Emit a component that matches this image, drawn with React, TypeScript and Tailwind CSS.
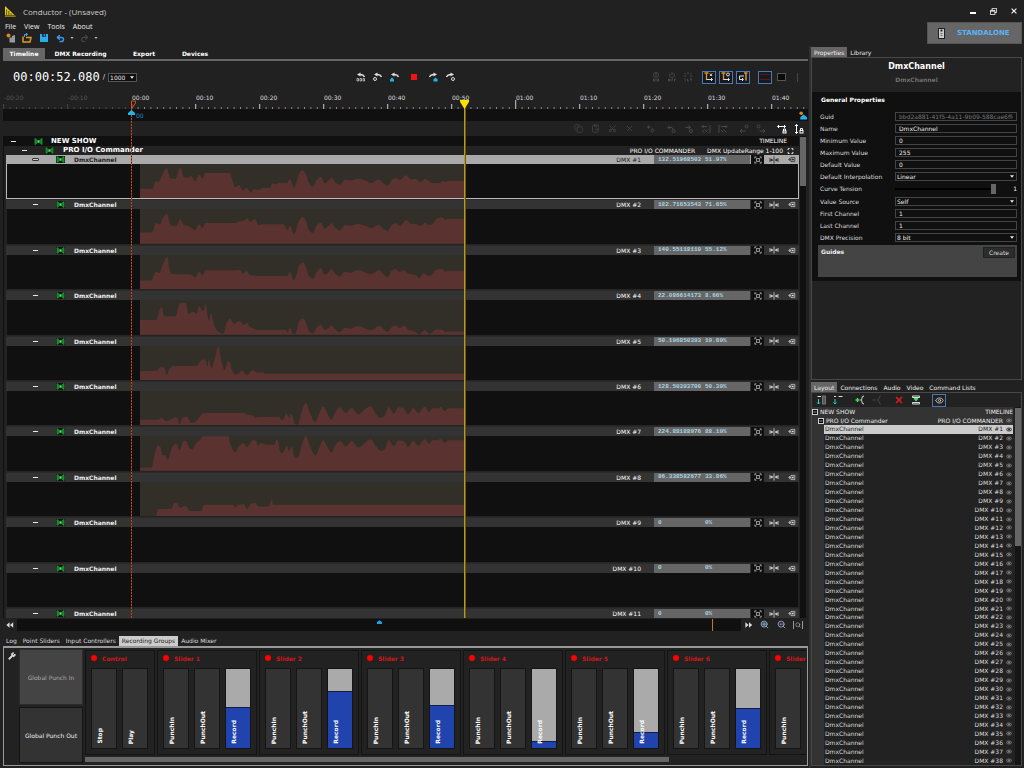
import React from "react";
import { Copy, ClipboardPaste, Scissors, X, Wrench, Minus, Search, ZoomIn, ZoomOut, Eye, Undo2, Redo2 } from "lucide-react";

type IconProps = { children: React.ReactNode; className?: string; box?: string };

const Glyph = ({ children, className = "w-[10px] h-[10px]", box = "0 0 20 20" }: IconProps) => (
  <svg viewBox={box} className={"shrink-0 " + className} fill="none" stroke="currentColor" strokeWidth="2" aria-hidden="true">
    {children}
  </svg>
);

const waves: { top: number; pts: string }[] = [
  { top: 27, pts: "30,101 68,101 77,79 88,80 97,58 110,39 121,70 136,72 151,37 161,65 175,68 184,63 195,79 207,59 218,71 226,54 298,54 316,96 328,90 338,106 350,99 363,112 372,101 385,105 398,98 420,98 427,85 437,88 447,83 471,83 480,72 492,98 500,80 508,55 518,46 527,55 535,80 549,95 560,75 573,65 584,85 594,78 605,68 617,83 629,89 645,74 660,76 685,71 710,78 725,85 745,73 760,85 773,92 785,75 797,69 810,74 828,61 842,73 856,71 872,81 884,71 896,77 905,84 928,84 940,77 945,81 955,77 1002,77" },
  { top: 164, pts: "30,234 66,234 78,206 90,210 100,188 111,178 122,212 138,216 151,195 161,212 175,215 195,227 207,210 218,221 226,206 318,206 325,202 340,200 350,192 362,202 376,194 384,213 398,210 460,210 472,227 480,214 492,240 508,197 518,188 528,200 537,228 549,235 560,212 573,205 584,223 594,216 605,207 617,221 629,228 645,212 660,214 685,209 710,216 725,222 745,211 760,223 773,229 785,213 797,206 810,214 828,197 845,209 856,208 872,215 884,205 896,211 908,210 918,195 936,189 946,197 955,193 1002,193" },
  { top: 300, pts: "30,376 64,376 77,350 88,354 98,328 112,306 119,345 127,357 180,358 195,367 207,351 218,361 226,346 318,346 330,344 338,357 350,348 360,360 390,363 470,363 480,351 492,375 508,331 518,322 528,337 537,362 549,371 560,350 573,340 584,360 594,354 605,343 617,357 629,364 645,350 660,353 685,345 710,354 725,357 748,345 760,357 773,366 785,347 797,342 810,351 822,345 836,356 856,359 868,369 880,355 896,363 905,359 920,344 936,341 946,350 955,347 1002,347" },
  { top: 437, pts: "30,497 78,497 94,458 104,486 136,486 150,446 167,446 175,478 190,472 200,478 207,456 220,470 227,450 236,500 243,476 252,512 265,533 280,538 290,505 300,493 312,508 328,500 342,512 350,505 360,517 390,527 468,527 472,535 480,521 490,540 496,538 508,500 518,492 528,505 537,530 549,537 560,519 573,510 584,527 594,522 605,513 617,525 629,533 645,520 660,523 685,515 710,524 725,527 748,514 773,533 785,518 797,513 810,521 822,513 836,527 855,532 868,540 884,527 898,538 920,525 938,526 945,533 960,531 1002,531" },
  { top: 18, pts: "30,93 78,93 92,81 102,83 111,104 118,87 130,78 200,78 212,62 226,58 232,80 237,57 244,83 254,57 265,19 274,62 284,90 294,63 299,65 306,90 317,104 337,92 350,105 368,90 380,97 400,97 405,101 1002,101" },
  { top: 154, pts: "30,240 84,240 95,234 108,244 122,240 133,233 142,234 149,252 158,233 170,230 184,250 200,242 222,220 342,220 352,225 370,227 376,234 386,232 447,232 456,242 470,221 477,234 484,222 496,254 504,254 515,215 528,189 540,220 556,246 568,220 580,200 592,222 604,240 616,217 630,203 647,220 665,205 685,224 703,210 722,200 738,222 751,235 765,225 776,202 791,222 806,203 820,205 834,224 850,206 865,220 884,201 898,217 907,206 925,206 932,201 944,214 956,206 1002,206" },
  { top: 290, pts: "30,385 65,385 74,345 84,318 90,320 97,347 106,348 113,363 126,325 138,313 149,333 160,306 168,305 178,325 186,330 200,310 212,300 218,291 296,291 300,310 315,338 328,320 341,311 350,323 370,302 378,304 384,318 392,311 410,316 434,316 439,302 444,304 450,335 457,342 470,320 477,335 484,322 496,355 504,355 515,317 528,290 540,320 556,348 568,325 580,302 592,322 604,340 616,318 630,304 647,321 665,305 685,325 703,312 722,300 738,320 751,335 765,328 776,302 791,320 806,303 825,308 834,323 850,304 865,319 884,300 898,313 907,303 925,303 930,298 944,310 956,303 1002,303" },
  { top: 427, pts: "77,530 85,508 124,507 133,490 141,490 149,503 167,498 180,514 214,514 221,495 308,495 316,503 325,495 336,494 341,491 350,507 366,491 376,490 384,500 416,500 426,479 429,495 1002,495" },
];

/* Monotone cubic curve through the recorded points, closed along the lane's floor. */
function areaPath(top: number, pts: string): string {
  const p = pts.split(" ").map((s) => {
    const [x, y] = s.split(",").map(Number);
    return [x - 30, y - top];
  });
  const slope = p.slice(1).map((q, i) => (q[1] - p[i][1]) / (q[0] - p[i][0]));
  const tangent = p.map((_, i) => {
    if (i === 0 || i === p.length - 1) return 0;
    const a = slope[i - 1];
    const b = slope[i];
    return a * b <= 0 ? 0 : (2 * a * b) / (a + b);
  });
  let d = `M${p[0][0]},104 L${p[0][0]},${p[0][1]}`;
  for (let i = 1; i < p.length; i++) {
    const h = (p[i][0] - p[i - 1][0]) / 3;
    d += ` C${p[i - 1][0] + h},${p[i - 1][1] + h * tangent[i - 1]} ${p[i][0] - h},${p[i][1] - h * tangent[i]} ${p[i][0]},${p[i][1]}`;
  }
  return d + " L972,104 Z";
}

const values = [
  ["132.51968503", "51.97%"],
  ["182.71653543", "71.65%"],
  ["140.55118110", "55.12%"],
  ["22.086614173", "8.66%"],
  ["50.196850393", "19.69%"],
  ["128.50393700", "50.39%"],
  ["224.88188976", "88.19%"],
  ["86.338582677", "33.86%"],
  ["0", "0%"],
  ["0", "0%"],
  ["0", "0%"],
];

const Bowtie = () => (
  <svg viewBox="0 0 18 14" className="h-[7px] w-[9px] shrink-0" aria-hidden="true">
    <rect width="18" height="14" fill="#0b1a0d" />
    <path d="M2 1 L7 5 H11 L16 1 V13 L11 9 H7 L2 13 Z" fill="#18782b" stroke="#22a83c" strokeWidth="1.4" />
    <circle cx="9" cy="7" r="1.8" fill="#5fe070" />
  </svg>
);

const Dash = ({ dark = false }: { dark?: boolean }) => (
  <button aria-label="Collapse" className="flex w-[7px] shrink-0 items-center">
    <span className={dark ? "h-[3px] w-[7px] rounded-[1px] border border-[#333] bg-[#ccc]" : "mx-px h-px w-[5px] bg-[#e8e8e8]"} />
  </button>
);

function ChannelHeader({ n, selected }: { n: number; selected: boolean }) {
  const [value, percent] = values[n - 1];
  return (
    <div className={"flex h-[9px] shrink-0 items-center text-[6px] leading-[9px] " + (selected ? "bg-[#aaa] text-[#222]" : "bg-[#333] text-[#f0f0f0]")}>
      <div className="ml-[26px] flex items-center"><Dash dark={selected} /></div>
      <div className="ml-[17px] flex"><Bowtie /></div>
      <span className="ml-[9px] flex-1 font-bold">DmxChannel</span>
      <span className={"mr-[13px] " + (selected ? "" : "text-white")}>DMX #{n}</span>
      <div className="flex h-full w-[96px] items-center bg-[#666] pl-1 font-['Liberation_Mono',monospace] font-bold leading-[8px] text-[#a9d5e2]">
        <span className="w-[47px] shrink-0">{value}</span>
        <span>{percent}</span>
      </div>
      <button aria-label="Fit" className="ml-px flex h-full w-[13px] items-center justify-center bg-[#101010] text-[#bbb]">
        <Glyph className="h-[8px] w-[8px]"><circle cx="10" cy="10" r="4" /><path d="M2 6 V2 H6 M14 2 H18 V6 M18 14 V18 H14 M6 18 H2 V14 M4 4 L7 7 M16 4 L13 7 M4 16 L7 13 M16 16 L13 13" /></Glyph>
      </button>
      <button aria-label="Split" className={"flex w-[20px] justify-center " + (selected ? "text-[#222]" : "text-[#ddd]")}>
        <Glyph className="h-[8px] w-[10px]" box="0 0 24 20"><path d="M12 1 V19 M2 5 V15 M22 5 V15 M2 10 H8 M22 10 H16" /><path d="M5 6 L10 10 L5 14 Z M19 6 L14 10 L19 14 Z" fill="currentColor" stroke="none" /></Glyph>
      </button>
      <button aria-label="Camera" className={"flex w-[15px] justify-center " + (selected ? "text-[#222]" : "text-[#ddd]")}>
        <Glyph className="h-[7px] w-[8px]"><path d="M7 4 H18 V16 H7 V4 M1 10 H7 M4 6 L1 10 L4 14" /><path d="M10 8 H15 V12 H10 Z" fill="currentColor" stroke="none" /></Glyph>
      </button>
    </div>
  );
}

function Channel({ n }: { n: number }) {
  const selected = n === 1;
  const wave = waves[n - 1];
  return (
    <div className="flex min-h-0 flex-1 flex-col">
      <ChannelHeader n={n} selected={selected} />
      <div className={"flex min-h-0 flex-1 border border-t-0 bg-[#101010] " + (selected ? "border-[#bbb]" : "border-[#242424]")}>
        {wave && (
          <svg viewBox="0 0 972 103" preserveAspectRatio="none" className="ml-[133px] h-full w-[324px] bg-[#322f28]" aria-hidden="true">
            <path d={areaPath(wave.top, wave.pts)} fill="#5a322f" />
          </svg>
        )}
      </div>
      <div className="h-px shrink-0 bg-[#2a2a2a]" />
    </div>
  );
}

const rulerLabels = ["-00:20", "-00:10", "00:00", "00:10", "00:20", "00:30", "00:40", "00:50", "01:00", "01:10", "01:20", "01:30", "01:40"];

function Ruler() {
  const minor = Array.from({ length: 126 }, (_, i) => i);
  return (
    <div className="h-[17px] overflow-hidden">
      <div className="flex h-[11px] pl-px text-[6px] leading-[11px]">
        {rulerLabels.map((t, i) => (
          <span key={t} className={"w-[64px] shrink-0 " + (i < 2 ? "text-[#555]" : "text-[#ddd]")}>{t}</span>
        ))}
      </div>
      <svg className="-mt-[4px] block h-[10px] w-full" aria-hidden="true">
        {minor.map((i) => {
          const major = i % 10 === 0;
          const h = i === 80 ? 9 : major ? 5 : 2;
          return <rect key={i} x={i * 6.4 + 0.2} y={10 - h} width="1" height={h} fill={i < 20 ? "#4a4a4a" : major ? "#ccc" : "#888"} />;
        })}
      </svg>
    </div>
  );
}

const editCell = "flex w-[17px] justify-center";

function EditBar() {
  return (
    <div className="flex h-[15px] items-center justify-end pr-px text-[#484848]">
      <button aria-label="Copy" className={editCell}><Copy size={9} /></button>
      <button aria-label="Paste" className={editCell}><ClipboardPaste size={9} /></button>
      <button aria-label="Cut" className={editCell}><Scissors size={9} className="-rotate-90" /></button>
      <button aria-label="Delete" className={editCell}><X size={9} /></button>
      <button aria-label="Add point" className={editCell + " mx-[4px]"}><Glyph><path d="M2 6 H9 M5 3 V9" /><circle cx="13" cy="13" r="3" /></Glyph></button>
      <button aria-label="Previous point" className={editCell}><Glyph><path d="M2 7 H10 L12 10 M5 3 L2 7 L5 10" /><circle cx="13" cy="14" r="3" /></Glyph></button>
      <button aria-label="Next point" className={editCell}><Glyph><path d="M3 7 H13 M9 3 L13 7 L9 10" /><circle cx="14" cy="14" r="3" /></Glyph></button>
      <button aria-label="Clear before" className={editCell}><Glyph><path d="M18 2 V18 M2 5 H12 M5 2 L2 5 L5 8 M2 12 L7 17 M7 11 L13 17 M2 17 L4 19 M12 11 L14 13" /></Glyph></button>
      <button aria-label="Clear after" className={editCell}><Glyph><path d="M2 2 V18 M6 5 H18 M15 2 L18 5 L15 8 M6 12 L11 17 M11 11 L17 17" /></Glyph></button>
      <button aria-label="Shift left" className={editCell + " ml-[4px]"}><Glyph><circle cx="15" cy="5" r="3" /><path d="M2 14 H13 M6 10 L2 14 L6 18" /></Glyph></button>
      <button aria-label="Shift right" className={editCell}><Glyph><circle cx="5" cy="5" r="3" /><path d="M7 14 H18 M14 10 L18 14 L14 18" /></Glyph></button>
      <button aria-label="Lock horizontally" className={editCell + " ml-[4px] text-white"}><Glyph><path d="M1 5 H17 M4 2 L1 5 L4 8 M14 2 L17 5 L14 8" /><rect x="12" y="14" width="6" height="4" /><path d="M13 14 V10 H17 V14" /></Glyph></button>
      <button aria-label="Lock vertically" className={editCell + " text-white"}><Glyph><path d="M5 1 V19 M2 4 L5 1 L8 4 M2 16 L5 19 L8 16" /><rect x="12" y="13" width="6" height="5" /><path d="M13 13 V9 H17 V13" /></Glyph></button>
    </div>
  );
}

const Arc = ({ flip = false }: { flip?: boolean }) => (
  <>
    <path d={flip ? "M3 10 Q5 5 12 5" : "M17 10 Q15 5 8 5"} strokeWidth="2.6" />
    <path d={flip ? "M11 1 L18 5 L11 9 Z" : "M9 1 L2 5 L9 9 Z"} fill="currentColor" stroke="none" />
  </>
);

function Transport() {
  const cell = "flex w-[17px] justify-center";
  const box = "mr-[3px] flex h-[13px] w-[14px] items-center justify-center border border-[#4a7ab5] bg-[#17191d] text-[#ddd]";
  return (
    <div className="flex h-[31px] items-center pt-px text-[#ddd]">
      <div className="flex w-[349px] items-center pl-[10px]">
        <span className="font-['DejaVu_Sans_Mono',monospace] text-[12px] leading-[14px] text-white">00:00:52.080</span>
        <label htmlFor="rate" className="ml-[3px] mr-[3px] text-[7px]">/</label>
        <div className="relative">
          <select id="rate" className="block h-[9px] w-[29px] appearance-none border border-[#555] bg-[#101010] pl-px text-[6px] leading-[7px] text-[#eee]"><option>1000</option></select>
          <Caret />
        </div>
      </div>
      <button aria-label="To zero" className={cell}><Glyph><Arc /><path d="M2 13 H5 V18 H2 Z M8 13 H11 V18 H8 Z M14 13 H17 V18 H14 Z" strokeWidth="1.4" /></Glyph></button>
      <button aria-label="Previous key" className={cell}><Glyph><Arc /><circle cx="4" cy="14" r="3" /></Glyph></button>
      <button aria-label="Previous marker" className={cell}><Glyph><Arc /><path d="M0 19 V15 L4 11 L8 15 V19 Z" fill="#1fb6f0" stroke="none" /></Glyph></button>
      <button aria-label="Stop" className="flex w-[21px] justify-center"><span className="h-[6px] w-[6px] bg-[#f01414]" /></button>
      <button aria-label="Next marker" className={cell}><Glyph><Arc flip /><path d="M11 19 V15 L15 11 L19 15 V19 Z" fill="#1fb6f0" stroke="none" /></Glyph></button>
      <button aria-label="Next key" className={cell}><Glyph><Arc flip /><circle cx="16" cy="14" r="3" /></Glyph></button>
      <div className="flex-1" />
      <div className="mr-[6px] flex text-[#484848]">
        <button aria-label="Go" className="flex w-[16px] justify-center"><Glyph><circle cx="10" cy="6" r="5" /><path d="M10 3 V8 M5 14 H8 V18 H5 Z M12 14 H15 V18 H12 Z" /></Glyph></button>
        <button aria-label="Off" className="flex w-[16px] justify-center"><Glyph><path d="M6 3 A5 5 0 1 0 14 3 M10 0 V6 M3 14 H6 V18 H3 Z M10 19 V14 H12 M15 19 V14 H18" /></Glyph></button>
        <button aria-label="Set" className="flex w-[16px] justify-center"><Glyph><path d="M10 0 V4 M3 2 L6 5 M17 2 L14 5 M1 8 H6 M19 8 H14 M3 14 H6 M3 18 H6 M9 14 V18 H12 M14 14 H18 M16 14 V18" /></Glyph></button>
      </div>
      <button aria-label="Snap to clips" className={box}><Glyph><path d="M1 2 H9 M5 2 V16" stroke="#e09020" strokeWidth="2.6" /><path d="M5 15 H17 M14 12 L17 15 L14 18 M12 3 L16 8 M16 3 L12 8" /></Glyph></button>
      <button aria-label="Snap to keys" className={box}><Glyph><path d="M1 2 H9 M5 2 V16" stroke="#e09020" strokeWidth="2.6" /><path d="M5 15 H17 M14 12 L17 15 L14 18" /><circle cx="14" cy="5" r="3" /></Glyph></button>
      <button aria-label="Follow" className={box}><Glyph><path d="M12 2 H19 M16 2 V17" stroke="#e09020" strokeWidth="3" /><path d="M12 8 H3 V15 H10 M8 12 L11 15 L8 18" /></Glyph></button>
      <button aria-label="Record lanes" className="ml-[5px] flex h-[13px] w-[14px] items-center justify-center border border-[#4a7ab5] bg-[#17191d] text-[#a01818]"><Glyph><path d="M1 5 H19 M1 15 H19" strokeDasharray="2 2" /></Glyph></button>
      <button aria-label="Frame" className="mx-[5px] flex h-[8px] w-[9px] border border-[#555] bg-[#0a0a0a]" />
      <span className="ml-[6px] mr-[10px] h-[9px] w-px bg-[#444]" />
    </div>
  );
}

const Caret = () => (
  <svg viewBox="0 0 8 5" className="pointer-events-none absolute right-[3px] top-[3px] h-[3px] w-[4px] fill-[#eee]" aria-hidden="true"><path d="M0 0 H8 L4 5 Z" /></svg>
);

const Punch = ({ name }: { name: string }) => (
  <button className="flex w-[26px] items-end justify-start border border-[#151515] bg-[#333] pb-[4px] pl-[4px] text-[6px] leading-[8px] text-white">
    <span className="rotate-180 font-bold [writing-mode:vertical-rl]">{name}</span>
  </button>
);

const GroupBox = ({ title, children, className = "w-[100px]" }: { title: string; children: React.ReactNode; className?: string }) => (
  <section className={"flex shrink-0 flex-col border border-[#141414] bg-[#222] px-[5px] pb-[5px] " + className}>
    <h3 className="flex h-[17px] items-center gap-[5px] pb-[3px] text-[6px] font-bold text-[#d01818]">
      <span className="h-[6px] w-[6px] rounded-full bg-[#ff0000]" />{title}
    </h3>
    <div className="flex min-h-0 flex-1 gap-[5px]">{children}</div>
  </section>
);

const sliderLevels = [52, 72, 55, 9, 20, 51, 60];

function RecordFader({ level, id }: { level: number; id: string }) {
  return (
    <div className="relative flex w-[26px] flex-col justify-end border border-[#151515] bg-[#aaa]">
      <div className="border-t border-[#141c40] bg-[#2143ae]" style={{ height: `${level}%` }} />
      <label htmlFor={id} className="absolute bottom-[4px] left-[4px] rotate-180 text-[6px] font-bold leading-[8px] text-white [writing-mode:vertical-rl]">Record</label>
      <input id={id} type="range" defaultValue={level} className="absolute inset-0 h-full w-full opacity-0 [writing-mode:vertical-lr]" />
    </div>
  );
}

const LeftPane = () => (
  <main className="flex min-w-0 flex-1 flex-col pl-[3px] pr-px">
    <nav className="mt-[2px] flex h-[13px] border-b-2 border-[#666] text-[6px] font-bold text-white">
      <button className="w-[42px] bg-[#666]">Timeline</button>
      <button className="w-[71px]">DMX Recording</button>
      <button className="w-[56px]">Export</button>
      <button className="w-[46px]">Devices</button>
    </nav>
    <Transport />
    <div className="relative flex min-h-0 flex-1 flex-col">
      <Ruler />
      <div className="flex h-[12px] items-center justify-end bg-[#101010]">
        <span className="mr-auto pl-[133px] text-[6px] leading-[7px] text-[#1c8fc0]">00</span>
        <Glyph className="h-[9px] w-[10px]"><circle cx="6" cy="5" r="4" fill="#d88a20" stroke="none" /><path d="M4 19 V14 L11 8 L19 14 V19 Z" fill="#1fb6f0" stroke="none" /></Glyph>
      </div>
      <EditBar />
      <div className="flex min-h-0 flex-1">
        <div className="flex min-w-0 flex-1 flex-col border-l border-[#101010]">
          <div className="flex h-[10px] shrink-0 items-center bg-[#101010] pl-[6px] text-[6px] leading-[10px] text-white">
            <Dash />
            <div className="ml-[17px] flex"><Bowtie /></div>
            <span className="ml-[8px] text-[7px] font-bold">NEW SHOW</span>
            <span className="ml-auto mr-[12px]">TIMELINE</span>
          </div>
          <div className="flex h-[9px] shrink-0 items-center bg-[#232323] pl-[17px] text-[6px] leading-[9px] text-white">
            <Dash />
            <div className="ml-[17px] flex"><Bowtie /></div>
            <span className="ml-[9px] flex-1 text-[7px] font-bold">PRO I/O Commander</span>
            <span className="mr-[12px]">PRO I/O COMMANDER</span>
            <span>DMX UpdateRange 1-100</span>
            <Glyph className="ml-[4px] mr-[5px] h-[6px] w-[7px]"><path d="M7 2 H2 V7 M13 2 H18 V7 M18 13 V18 H13 M7 18 H2 V13" strokeWidth="3" /></Glyph>
          </div>
          <div className="flex min-h-0 flex-1 flex-col pl-[2px]">
            {values.slice(0, 10).map((_, i) => <Channel key={i} n={i + 1} />)}
            <ChannelHeader n={11} selected={false} />
          </div>
        </div>
        <div className="ml-px mr-[2px] w-[6px] bg-[#101010]"><div className="mt-px h-[49px] bg-[#666]" /></div>
      </div>
      <div className="pointer-events-none absolute bottom-0 left-[128px] top-[14px] w-px bg-[repeating-linear-gradient(to_bottom,#b84a1e_0px,#b84a1e_2px,#4a2416_2px,#4a2416_3px)]" />
      <svg viewBox="0 0 10 16" className="pointer-events-none absolute left-[124px] top-[8px] h-[16px] w-[10px]" aria-hidden="true">
        <path d="M4.500 8 V1 H8.500 V3 L4.500 9" fill="none" stroke="#d0501e" />
        <path d="M1 15 V13 L4.500 10 L8 13 V15 Z" fill="#1fb6f0" />
      </svg>
      <div className="pointer-events-none absolute bottom-0 left-[461px] top-[12px] w-[2px] border-l border-[#b89a14] bg-[#6b5c12]" />
      <svg viewBox="0 0 10 10" className="pointer-events-none absolute left-[457px] top-[8px] h-[9px] w-[9px]" aria-hidden="true"><path d="M0 0 H10 V2 L5 10 L0 2 Z" fill="#ffe000" /></svg>
    </div>
    <div className="flex h-[13px] shrink-0 items-center text-[#ddd]">
      <button aria-label="Scroll back" className="flex w-[14px] justify-center"><Glyph className="h-[8px] w-[8px]"><path d="M9 3 V17 L1 10 Z M18 3 V17 L10 10 Z" fill="currentColor" stroke="none" /></Glyph></button>
      <div className="relative h-[12px] flex-1 bg-[#101010]">
        <svg viewBox="0 0 8 6" className="absolute left-[360px] top-[1px] h-[4px] w-[5px]" aria-hidden="true"><path d="M0 6 V3 L4 0 L8 3 V6 Z" fill="#1fa0e0" /></svg>
        <span className="absolute right-[28px] top-0 h-full w-px bg-[#c07a10]" />
      </div>
      <button aria-label="Scroll forward" className="flex w-[15px] justify-center"><Glyph className="h-[8px] w-[8px]"><path d="M1 3 V17 L9 10 Z M10 3 V17 L18 10 Z" fill="currentColor" stroke="none" /></Glyph></button>
      <button aria-label="Zoom in" className="flex w-[17px] justify-center text-[#bbb]"><ZoomIn size={9} fill="#1d4f80" /></button>
      <button aria-label="Zoom out" className="flex w-[16px] justify-center text-[#bbb]"><ZoomOut size={9} fill="#1a2f45" /></button>
      <button aria-label="Zoom to fit" className="mr-[2px] flex w-[17px] items-center justify-center text-[#ccc]"><span className="h-[8px] w-px bg-[#999]" /><Search size={6} className="mx-px" /><span className="h-[8px] w-px bg-[#999]" /></button>
    </div>
    <nav className="mt-[4px] flex h-[11px] shrink-0 items-end text-[6px] leading-[10px] text-[#ddd]">
      <button className="px-[3px]">Log</button>
      <button className="px-[3px]">Point Sliders</button>
      <button className="px-[3px]">Input Controllers</button>
      <button className="bg-[#ccc] px-[3px] text-[#222]">Recording Groups</button>
      <button className="px-[3px]">Audio Mixer</button>
    </nav>
    <section className="mb-[2px] flex h-[120px] shrink-0 overflow-hidden border border-t-2 border-[#999] bg-[#222] pr-px pt-px">
      <button aria-label="Settings" className="flex w-[15px] shrink-0 justify-center pt-[2px] text-[#ddd]"><Wrench size={8} fill="currentColor" className="mt-px" /></button>
      <div className="flex w-[64px] shrink-0 flex-col gap-[2px] pb-[2px] text-[6px]">
        <button className="flex-1 border border-[#2c2c2c] bg-[#444] text-[#aaa]">Global Punch In</button>
        <button className="flex-1 border border-[#141414] bg-[#333] text-[#eee]">Global Punch Out</button>
      </div>
      <div className="ml-[2px] flex min-w-0 flex-1 flex-col overflow-hidden">
        <div className="mt-px flex min-h-0 flex-1 gap-[2px]">
          <GroupBox title="Control" className="w-[70px]"><Punch name="Stop" /><Punch name="Play" /></GroupBox>
          {sliderLevels.map((level, i) => (
            <GroupBox key={i} title={`Slider ${i + 1}`}>
              <Punch name="PunchIn" />
              <Punch name="PunchOut" />
              <RecordFader level={level} id={`record-${i + 1}`} />
            </GroupBox>
          ))}
        </div>
        <div className="mb-[3px] mt-[2px] h-[5px] w-[81%] shrink-0 bg-[#666]" />
      </div>
    </section>
  </main>
);

type Field = { label: string; value: string; kind?: "select" | "range" | "locked" };
const fields: Field[] = [
  { label: "Guid", value: "bbd2a881-41f5-4a11-9b09-588cae6ff4", kind: "locked" },
  { label: "Name", value: "DmxChannel" },
  { label: "Minimum Value", value: "0" },
  { label: "Maximum Value", value: "255" },
  { label: "Default Value", value: "0" },
  { label: "Default Interpolation", value: "Linear", kind: "select" },
  { label: "Curve Tension", value: "1", kind: "range" },
  { label: "Value Source", value: "Self", kind: "select" },
  { label: "First Channel", value: "1" },
  { label: "Last Channel", value: "1" },
  { label: "DMX Precision", value: "8 bit", kind: "select" },
];

function FieldRow({ label, value, kind }: Field) {
  const id = label.toLowerCase().replace(/ /g, "-");
  const box = "block h-[9px] w-full border border-[#444] bg-[#101010] text-[6px] leading-[7px] outline-none ";
  return (
    <div className={"flex items-center " + (kind === "range" ? "h-[13px]" : "h-[12px]")}>
      <label htmlFor={id} className="w-[75px] shrink-0 text-[#ddd]">{label}</label>
      {kind === "select" ? (
        <div className="relative flex-1">
          <select id={id} className={box + "appearance-none pl-px text-[#eee]"}><option>{value}</option></select>
          <Caret />
        </div>
      ) : kind === "range" ? (
        <>
          <input id={id} type="range" min={0} max={1} step={0.01} defaultValue={1} className="h-[10px] w-[101px] appearance-none bg-transparent [&::-webkit-slider-runnable-track]:h-[2px] [&::-webkit-slider-runnable-track]:bg-black [&::-webkit-slider-thumb]:-mt-[4px] [&::-webkit-slider-thumb]:h-[10px] [&::-webkit-slider-thumb]:w-[5px] [&::-webkit-slider-thumb]:appearance-none [&::-webkit-slider-thumb]:bg-[#666]" />
          <output htmlFor={id} className="ml-auto text-[#eee]">{value}</output>
        </>
      ) : (
        <input id={id} readOnly={kind === "locked"} defaultValue={value} className={box + "min-w-0 flex-1 px-[3px] " + (kind === "locked" ? "text-[#777]" : "text-[#eee]")} />
      )}
    </div>
  );
}

const Toggle = () => (
  <button aria-label="Collapse" className="flex h-[6px] w-[6px] items-center justify-center border border-[#ccc] bg-black"><Minus size={4} strokeWidth={4} /></button>
);

const Link = () => (
  <svg viewBox="0 0 14 10" className="h-[5px] w-[6px] shrink-0" fill="none" stroke="currentColor" strokeWidth="1.5" aria-hidden="true">
    <ellipse cx="7" cy="5" rx="6" ry="3.600" /><path d="M4 5 H10 M7 2 V8" />
  </svg>
);

const RightPane = () => (
  <aside className="flex w-[215px] shrink-0 flex-col border-l-2 border-[#303030] pr-[2px] text-[6px]">
    <nav className="mt-px flex h-[10px] shrink-0 text-[#eee]">
      <button className="bg-[#666] px-[3px]">Properties</button>
      <button className="px-[3px]">Library</button>
    </nav>
    <section className="h-[323px] shrink-0 border border-[#484848] bg-[#222]">
      <header className="h-[34px] pt-[3px] text-center font-bold">
        <h1 className="text-[8px] leading-[11px] text-white">DmxChannel</h1>
        <h2 className="mt-[4px] text-[6px] leading-[8px] text-[#707070]">DmxChannel</h2>
      </header>
      <div className="bg-[#101010] pb-[4px] pl-[6px] pr-[4px]">
        <h3 className="h-[18px] pl-[3px] text-[6px] font-bold leading-[16px] text-white">General Properties</h3>
        <div className="pl-[2px]">{fields.map((f) => <FieldRow key={f.label} {...f} />)}</div>
        <div className="mt-[2px] flex h-[32px] items-start justify-between bg-[#444] p-[2px] pl-[3px]">
          <span className="pt-px font-bold leading-[8px] text-[#eee]">Guides</span>
          <button className="h-[11px] w-[32px] border border-[#222] bg-[#2c2c2c] text-[#ddd]">Create</button>
        </div>
      </div>
    </section>
    <nav className="mt-[2px] flex h-[10px] shrink-0 text-[#eee]">
      <button className="bg-[#666] px-[3px]">Layout</button>
      <button className="px-[3px]">Connections</button>
      <button className="px-[3px]">Audio</button>
      <button className="px-[3px]">Video</button>
      <button className="px-[3px]">Command Lists</button>
    </nav>
    <section className="mb-[2px] flex min-h-0 flex-1 flex-col border border-[#484848] bg-[#222]">
      <div className="flex h-[14px] shrink-0 items-center text-[#ddd]">
        <button aria-label="Add channel" className="ml-[4px] flex"><Glyph><rect x="13" y="2" width="6" height="16" fill="#555" stroke="#777" /><path d="M3 3 H10" /><path d="M5 8 V18 M2 15 L5 18 L8 15" stroke="#20d0d0" /></Glyph></button>
        <button aria-label="Add group" className="ml-[7px] flex"><Glyph><path d="M2 3 H6 M11 3 H19" /><path d="M4 8 V18 M1 15 L4 18 L7 15" stroke="#20d0d0" /></Glyph></button>
        <button aria-label="Expand all" className="ml-[12px] flex"><Glyph><path d="M1 10 H9 M5 6 V14" stroke="#3ce050" strokeWidth="3" /><path d="M18 2 Q14 2 14 6 Q14 10 11 10 Q14 10 14 14 Q14 18 18 18" /></Glyph></button>
        <button aria-label="Collapse all" className="ml-[7px] flex text-[#444]"><Glyph><path d="M1 10 H8 M18 2 Q14 2 14 6 Q14 10 11 10 Q14 10 14 14 Q14 18 18 18" /></Glyph></button>
        <button aria-label="Delete" className="ml-[12px] flex text-[#e01818]"><X size={10} strokeWidth={4} /></button>
        <button aria-label="Move" className="ml-[7px] flex"><Glyph><path d="M3 2 H17 V5 H3 Z M3 15 H17 V18 H3 Z" /><path d="M6 7 H14 L10 12 Z" fill="#3ce050" stroke="#3ce050" /></Glyph></button>
        <button aria-label="Show links" className="ml-[11px] flex h-[13px] w-[14px] items-center justify-center border border-[#4a7ab5]"><Eye size={9} /></button>
      </div>
      <div className="flex min-h-0 flex-1">
        <div className="flex min-w-0 flex-1 flex-col bg-[#333] text-[#eee]">
          <div className="flex h-[9px] shrink-0 items-center gap-[2px]"><Toggle /><span>NEW SHOW</span><span className="ml-auto">TIMELINE</span></div>
          <div className="flex h-[9px] shrink-0 items-center gap-[2px] pl-[6px] pr-px"><Toggle /><span>PRO I/O Commander</span><span className="ml-auto mr-px">PRO I/O COMMANDER</span><span className="text-[#999]"><Link /></span></div>
          <ul className="ml-[12px] flex min-h-0 flex-1 flex-col bg-[#222]">
            {Array.from({ length: 38 }, (_, i) => (
              <li key={i} className={"flex min-h-0 flex-1 items-center px-px leading-[8px] " + (i === 0 ? "bg-[#ccc] text-[#222]" : "text-[#ddd]")}>
                <span className="flex-1">DmxChannel</span>
                <span className="mr-[3px]">DMX #{i + 1}</span>
                <span className={i === 0 ? "text-black" : "text-[#999]"}><Link /></span>
              </li>
            ))}
          </ul>
        </div>
        <div className="ml-[2px] w-[6px] shrink-0 bg-[#151515]"><div className="mt-px h-[138px] bg-[#666]" /></div>
      </div>
    </section>
  </aside>
);

const Drop = ({ className }: { className: string }) => (
  <svg viewBox="0 0 8 5" className={"h-[2px] w-[4px] fill-[#bbb] " + className} aria-hidden="true"><path d="M0 0 H8 L4 5 Z" /></svg>
);

export default function App() {
  return (
    <div className="flex h-screen flex-col overflow-hidden bg-[#212121] font-['DejaVu_Sans',sans-serif] text-[6px] leading-[9px] text-[#ddd]">
      <header className="flex h-[46px] shrink-0 justify-between">
        <div className="font-['Open_Sans',sans-serif]">
          <div className="flex h-[22px] items-center pl-[5px]">
            <svg viewBox="0 0 20 20" className="h-[11px] w-[11px]" aria-hidden="true">
              <path d="M0 0 L20 19 H0 Z" fill="#f0d010" />
              <path d="M3 6 V16 M7 9 V16 M11 13 V16 M0 17 H18" stroke="#222" strokeWidth="1.400" />
            </svg>
            <span className="ml-[7px] text-[8px] leading-[11px] text-[#ccc]">Conductor - (Unsaved)</span>
          </div>
          <nav className="flex h-[10px] items-center gap-[8px] pl-[5px] text-[7px] leading-[10px] text-[#eee]">
            <button>File</button><button>View</button><button>Tools</button><button>About</button>
          </nav>
          <div className="flex h-[12px] items-center pl-[6px]">
            <button aria-label="New" className="flex"><Glyph><circle cx="5" cy="5" r="4" fill="#d88a20" stroke="none" /><path d="M7 19 V9 L12 9 V6 L18 4 V19 Z" fill="#999" stroke="none" /></Glyph></button>
            <button aria-label="Open" className="ml-[6px] flex"><Glyph><path d="M2 7 V18 H16 L18 9 H8" stroke="#e09a20" strokeWidth="3" /><path d="M5 8 V3 H10 M8 0 L11 3 L8 6" stroke="#4aa0f0" /></Glyph></button>
            <button aria-label="Save" className="ml-[8px] flex"><Glyph className="h-[8px] w-[8px]"><path d="M0 0 H5 V7 H15 V0 H20 V20 H0 Z M9 0 H12 V5 H9 Z" fill="#28aef0" stroke="none" /></Glyph></button>
            <button aria-label="Undo" className="ml-[8px] flex text-[#3b96e8]"><Undo2 size={9} strokeWidth={4} /></button>
            <Drop className="ml-[5px]" />
            <button aria-label="Redo" className="ml-[6px] flex text-[#444]"><Redo2 size={9} strokeWidth={3} /></button>
            <Drop className="ml-[5px]" />
          </div>
        </div>
        <div className="flex flex-col items-end pr-[2px]">
          <div className="flex h-[22px] items-center gap-[14px] pr-[5px] text-white">
            <button aria-label="Minimize" className="flex h-[6px] w-[6px] items-end"><span className="h-[2px] w-full bg-white" /></button>
            <button aria-label="Restore" className="flex"><Glyph className="h-[7px] w-[7px]"><path d="M6 6 V1 H19 V13 H14 M1 7 H14 V19 H1 Z M1 9 H14" strokeWidth="2.400" /></Glyph></button>
            <button aria-label="Close" className="flex"><Glyph className="h-[6px] w-[6px]"><path d="M2 2 L18 18 M18 2 L2 18" strokeWidth="3.500" /></Glyph></button>
          </div>
          <button className="flex h-[22px] w-[95px] items-center border border-[#555] bg-[#666] pl-[10px] text-[7px] font-bold text-[#5cb3f8]">
            <svg viewBox="0 0 14 22" className="h-[11px] w-[7px]" aria-hidden="true"><rect x="1" y="1" width="12" height="20" fill="#ccc" stroke="#222" strokeWidth="2" /><rect x="5" y="3" width="4" height="4" fill="#222" /><path d="M5 11 H9 M5 15 H9" stroke="#666" strokeWidth="2" /></svg>
            <span className="ml-[12px]">STANDALONE</span>
          </button>
        </div>
      </header>
      <div className="flex min-h-0 flex-1">
        <LeftPane />
        <RightPane />
      </div>
    </div>
  );
}
